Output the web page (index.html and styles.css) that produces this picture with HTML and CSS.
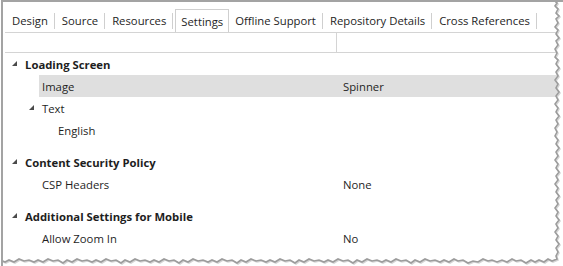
FILE: index.html
```html
<!DOCTYPE html>
<html lang="en">
<head>
  <meta charset="UTF-8">
  <meta name="viewport" content="width=device-width, initial-scale=1.0">
  <title>Settings</title>
  <link rel="stylesheet" href="styles.css">
</head>
<body>

<div class="frame">
  <!-- Tab strip -->
  <div class="tabs">
    <div class="tab">Design</div>
    <div class="tab">Source</div>
    <div class="tab">Resources</div>
    <div class="tab active">Settings</div>
    <div class="tab after-active">Offline Support</div>
    <div class="tab">Repository Details</div>
    <div class="tab">Cross References</div>
  </div>

  <!-- Property grid -->
  <div class="grid">
    <div class="grid-head">
      <div class="head-name"></div>
      <div class="head-value"></div>
    </div>

    <div class="group">
      <div class="row cat">
        <div class="name lvl0"><span class="exp"><svg width="5" height="5" viewBox="0 0 5 5"><polygon points="5,0 5,5 0,5"/></svg></span>Loading Screen</div>
      </div>
      <div class="row selected">
        <div class="name lvl1"><span class="exp"></span>Image</div>
        <div class="value">Spinner</div>
      </div>
      <div class="row">
        <div class="name lvl1"><span class="exp"><svg width="5" height="5" viewBox="0 0 5 5"><polygon points="5,0 5,5 0,5"/></svg></span>Text</div>
      </div>
      <div class="row">
        <div class="name lvl2"><span class="exp"></span>English</div>
      </div>
    </div>

    <div class="group">
      <div class="row cat">
        <div class="name lvl0"><span class="exp"><svg width="5" height="5" viewBox="0 0 5 5"><polygon points="5,0 5,5 0,5"/></svg></span>Content Security Policy</div>
      </div>
      <div class="row">
        <div class="name lvl1"><span class="exp"></span>CSP Headers</div>
        <div class="value">None</div>
      </div>
    </div>

    <div class="group">
      <div class="row cat">
        <div class="name lvl0"><span class="exp"><svg width="5" height="5" viewBox="0 0 5 5"><polygon points="5,0 5,5 0,5"/></svg></span>Additional Settings for Mobile</div>
      </div>
      <div class="row">
        <div class="name lvl1"><span class="exp"></span>Allow Zoom In</div>
        <div class="value">No</div>
      </div>
    </div>
  </div>

  <!-- Torn paper edge drawn over the right and bottom of the capture -->
  <svg class="tear" width="563" height="266" viewBox="0 0 563 266">
    <path class="tear-fill" d="M563,0 L554,0 557,3 555,6 558,9 556,13 559,16 556,19 558,23 555,27 558,30 556,34 559,38 556,41 558,45 555,49 557,53 555,57 558,60 556,64 559,68 556,72 558,76 555,80 558,84 556,88 559,92 556,96 558,100 555,104 558,108 556,112 559,116 556,120 558,124 555,128 557,132 555,136 558,140 556,144 559,148 556,152 558,156 555,160 558,164 556,168 559,172 556,176 558,180 555,184 558,188 556,192 559,196 556,200 558,204 555,208 558,212 556,216 559,220 556,224 558,228 555,232 558,236 556,240 559,244 556,248 558,252 556,256 557,259 552,261 548,259 544,262 539,260 535,262 531,260 526,263 521,260 516,261 512,259 507,262 502,260 497,262 492,260 488,261 483,259 478,262 473,261 468,263 463,260 458,261 454,259 449,262 444,260 440,262 435,260 430,261 425,259 420,262 415,260 411,263 406,260 401,261 396,259 391,262 386,260 382,262 377,260 372,261 367,259 362,262 357,260 353,263 348,260 343,261 338,259 333,262 328,260 324,262 319,260 314,261 309,259 304,262 299,260 295,263 290,260 285,261 280,259 275,262 270,260 266,262 261,260 256,261 251,259 246,262 241,260 237,263 232,260 227,261 222,259 217,262 212,260 208,262 203,260 198,261 193,259 188,262 183,260 179,263 174,260 169,261 164,259 159,262 154,260 150,262 145,260 140,261 135,259 130,262 125,260 121,263 116,260 111,261 106,259 101,262 96,260 92,262 87,260 82,261 77,259 72,262 67,260 63,263 58,260 53,261 48,259 43,262 38,260 34,262 29,260 24,261 19,259 14,262 9,260 5,262 0,260 L0,266 563,266 Z"/>
    <polyline class="tear-shadow" points="555,1 558,4 556,7 559,10 557,14 560,17 557,20 559,24 556,28 559,31 557,35 560,39 557,42 559,46 556,50 558,54 556,58 559,61 557,65 560,69 557,73 559,77 556,81 559,85 557,89 560,93 557,97 559,101 556,105 559,109 557,113 560,117 557,121 559,125 556,129 558,133 556,137 559,141 557,145 560,149 557,153 559,157 556,161 559,165 557,169 560,173 557,177 559,181 556,185 559,189 557,193 560,197 557,201 559,205 556,209 559,213 557,217 560,221 557,225 559,229 556,233 559,237 557,241 560,245 557,249 559,253 557,257 558,260 553,262 549,260 545,263 540,261 536,263 532,261 527,264 522,261 517,262 513,260 508,263 503,261 498,263 493,261 489,262 484,260 479,263 474,262 469,264 464,261 459,262 455,260 450,263 445,261 441,263 436,261 431,262 426,260 421,263 416,261 412,264 407,261 402,262 397,260 392,263 387,261 383,263 378,261 373,262 368,260 363,263 358,261 354,264 349,261 344,262 339,260 334,263 329,261 325,263 320,261 315,262 310,260 305,263 300,261 296,264 291,261 286,262 281,260 276,263 271,261 267,263 262,261 257,262 252,260 247,263 242,261 238,264 233,261 228,262 223,260 218,263 213,261 209,263 204,261 199,262 194,260 189,263 184,261 180,264 175,261 170,262 165,260 160,263 155,261 151,263 146,261 141,262 136,260 131,263 126,261 122,264 117,261 112,262 107,260 102,263 97,261 93,263 88,261 83,262 78,260 73,263 68,261 64,264 59,261 54,262 49,260 44,263 39,261 35,263 30,261 25,262 20,260 15,263 10,261 6,263 1,261"/>
    <polyline class="tear-line" points="554,0 557,3 555,6 558,9 556,13 559,16 556,19 558,23 555,27 558,30 556,34 559,38 556,41 558,45 555,49 557,53 555,57 558,60 556,64 559,68 556,72 558,76 555,80 558,84 556,88 559,92 556,96 558,100 555,104 558,108 556,112 559,116 556,120 558,124 555,128 557,132 555,136 558,140 556,144 559,148 556,152 558,156 555,160 558,164 556,168 559,172 556,176 558,180 555,184 558,188 556,192 559,196 556,200 558,204 555,208 558,212 556,216 559,220 556,224 558,228 555,232 558,236 556,240 559,244 556,248 558,252 556,256 557,259 552,261 548,259 544,262 539,260 535,262 531,260 526,263 521,260 516,261 512,259 507,262 502,260 497,262 492,260 488,261 483,259 478,262 473,261 468,263 463,260 458,261 454,259 449,262 444,260 440,262 435,260 430,261 425,259 420,262 415,260 411,263 406,260 401,261 396,259 391,262 386,260 382,262 377,260 372,261 367,259 362,262 357,260 353,263 348,260 343,261 338,259 333,262 328,260 324,262 319,260 314,261 309,259 304,262 299,260 295,263 290,260 285,261 280,259 275,262 270,260 266,262 261,260 256,261 251,259 246,262 241,260 237,263 232,260 227,261 222,259 217,262 212,260 208,262 203,260 198,261 193,259 188,262 183,260 179,263 174,260 169,261 164,259 159,262 154,260 150,262 145,260 140,261 135,259 130,262 125,260 121,263 116,260 111,261 106,259 101,262 96,260 92,262 87,260 82,261 77,259 72,262 67,260 63,263 58,260 53,261 48,259 43,262 38,260 34,262 29,260 24,261 19,259 14,262 9,260 5,262 0,260"/>
  </svg>
</div>

</body>
</html>
```

FILE: styles.css
```css
body {
  margin: 0;
  background: #ffffff;
  font-family: "Open Sans", "Noto Sans", sans-serif;
  font-size: 11.3px;
  color: #1e1e1e;
}
.frame {
  position: relative;
  width: 562px;
  height: 266px;
  margin-left: 1px;
  border-top: 2px solid #a3a3a3;
  border-left: 2px solid #a3a3a3;
  box-sizing: border-box;
  overflow: hidden;
}
.tabs {
  display: flex;
  align-items: flex-end;
  height: 30px;
  margin-left: 2px;
  border-bottom: 1px solid #d4d4d4;
}
.tab {
  display: flex;
  align-items: center;
  height: 23px;
  padding: 0 7px;
  box-sizing: border-box;
  position: relative;
}
.tab::after {
  content: "";
  position: absolute;
  right: 0;
  top: 4px;
  height: 16px;
  border-right: 1px solid #cfcfcf;
}
.tab.active {
  border: 1px solid #cfcfcf;
  border-bottom: none;
  margin-left: 2px;
  padding: 0 5px;
}
.tab.active::after {
  display: none;
}
.tab.after-active {
  padding-left: 6px;
}
.grid {
  margin-left: 2px;
}
.grid-head {
  display: flex;
  height: 19px;
  border-bottom: 1px solid #d4d4d4;
}
.head-name {
  width: 331px;
  border-right: 1px solid #d4d4d4;
}
.group {
  margin-bottom: 10px;
}
.row {
  display: flex;
  align-items: center;
  height: 22px;
}
.row.selected {
  background: linear-gradient(to right, transparent 34px, #dfdfdf 34px);
}
.name {
  display: flex;
  align-items: center;
  width: 331px;
  flex: none;
  box-sizing: border-box;
}
.cat .name {
  font-weight: bold;
}
.lvl0 { padding-left: 7px; }
.lvl1 { padding-left: 24px; }
.lvl2 { padding-left: 40px; }
.exp {
  display: inline-flex;
  width: 13px;
  flex: none;
}
.exp svg {
  fill: #4a4a4a;
  margin-top: -2px;
}
.value {
  padding-left: 7px;
}
.tear {
  position: absolute;
  left: -3px;
  top: -2px;
}
.tear-fill {
  fill: #ffffff;
}
.tear-line {
  fill: none;
  stroke: #9c9c9c;
  stroke-width: 1.6;
}
.tear-shadow {
  fill: none;
  stroke: #d6d6d6;
  stroke-width: 1.6;
}
```
